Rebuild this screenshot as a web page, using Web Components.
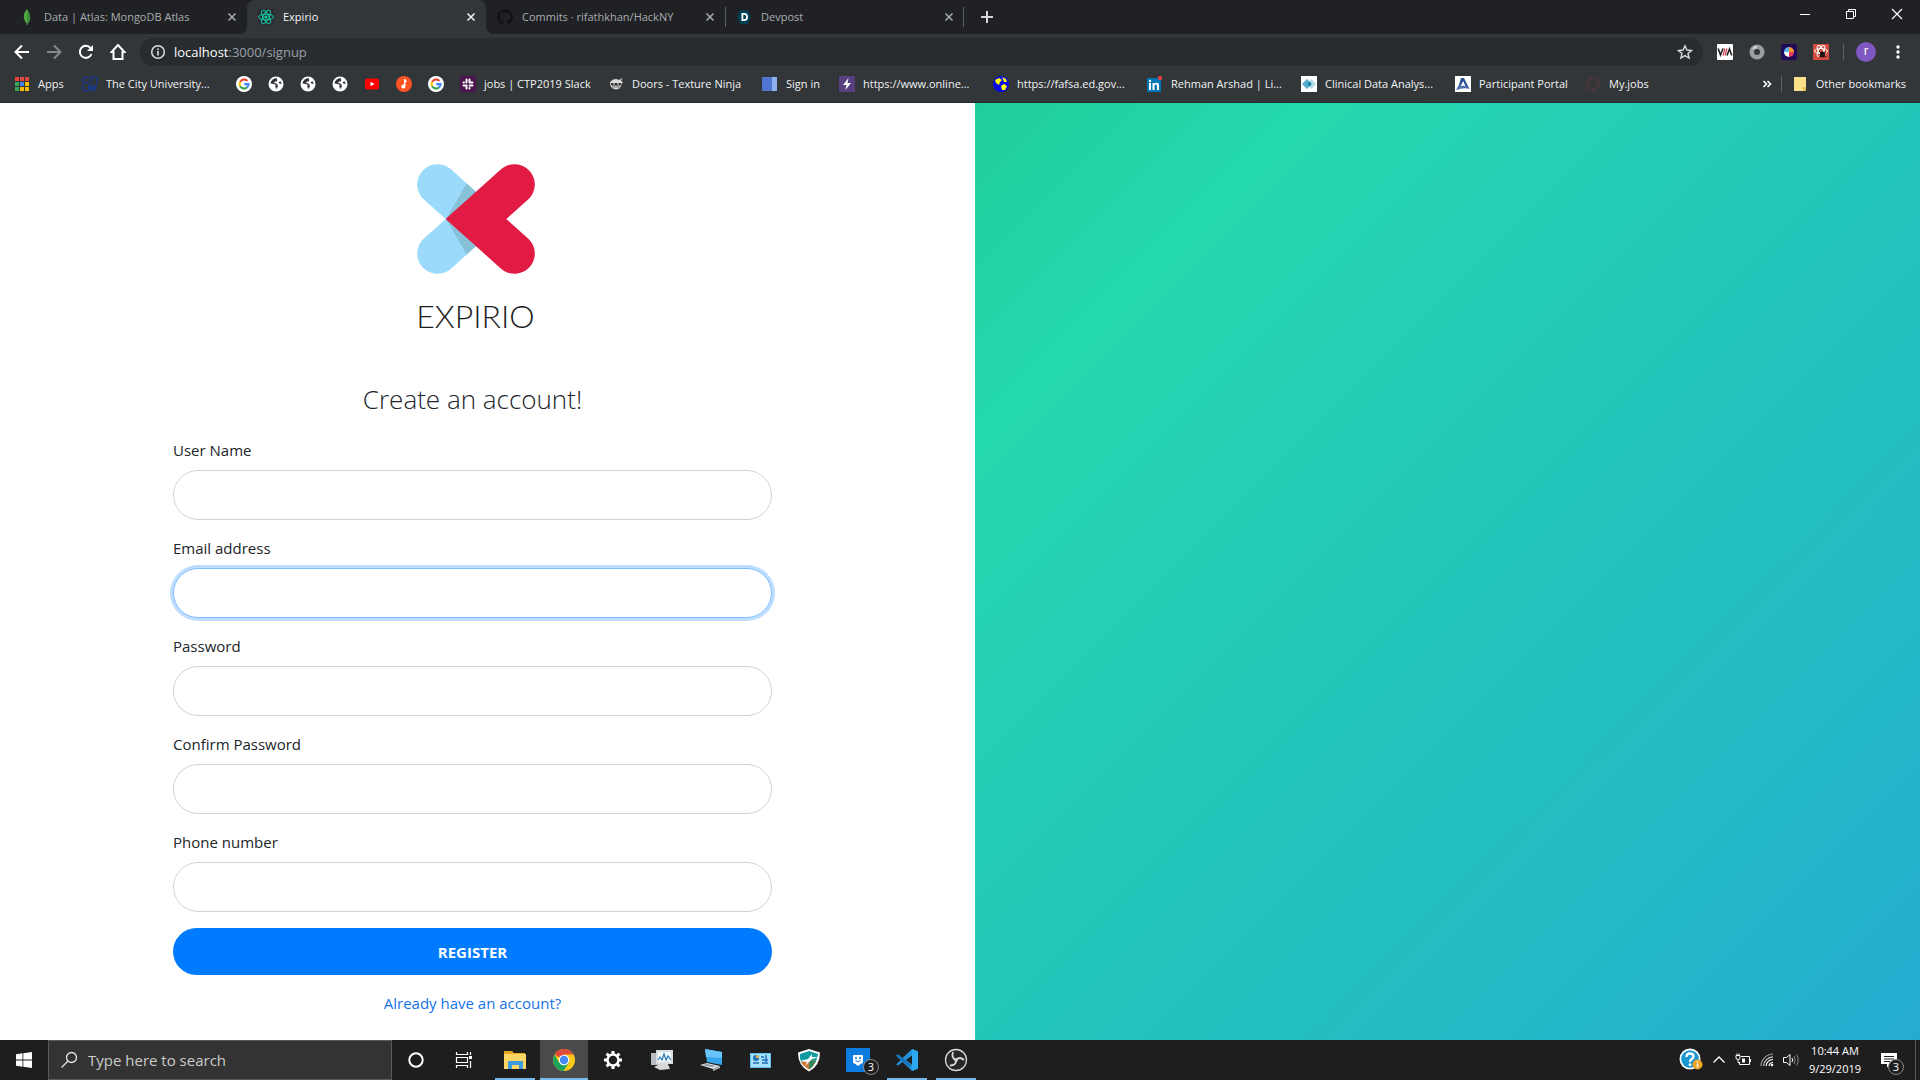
<!DOCTYPE html>
<html lang="en">
<head>
<meta charset="utf-8">
<title>Expirio</title>
<style>
    html, body {
        margin: 0;
        height: 100%;
    }

    body {
        display: flex;
        flex-direction: column;
        min-height: 100vh;
        overflow: hidden;
        font-family: "Open Sans", "Noto Sans", sans-serif;
        font-size: 15px;
        color: #212529;
        background: #ffffff;
    }

    signup-page {
        flex: 1;
    }
</style>
</head>
<body>
<browser-chrome>
    <browser-tab slot="tab" icon="leaf">Data | Atlas: MongoDB Atlas</browser-tab>
    <browser-tab slot="tab" icon="react" active>Expirio</browser-tab>
    <browser-tab slot="tab" icon="github">Commits · rifathkhan/HackNY</browser-tab>
    <browser-tab slot="tab" icon="devpost" divider>Devpost</browser-tab>

    <bookmark-item icon="apps" width="68">Apps</bookmark-item>
    <bookmark-item icon="cuny" width="154">The City University...</bookmark-item>
    <bookmark-item icon="google"></bookmark-item>
    <bookmark-item icon="globe"></bookmark-item>
    <bookmark-item icon="globe"></bookmark-item>
    <bookmark-item icon="globe"></bookmark-item>
    <bookmark-item icon="youtube"></bookmark-item>
    <bookmark-item icon="music"></bookmark-item>
    <bookmark-item icon="google"></bookmark-item>
    <bookmark-item icon="slack" width="148">jobs | CTP2019 Slack</bookmark-item>
    <bookmark-item icon="ninja" width="154">Doors - Texture Ninja</bookmark-item>
    <bookmark-item icon="signin" width="77">Sign in</bookmark-item>
    <bookmark-item icon="bolt" width="154">https://www.online...</bookmark-item>
    <bookmark-item icon="earth" width="154">https://fafsa.ed.gov...</bookmark-item>
    <bookmark-item icon="linkedin" width="154">Rehman Arshad | Li...</bookmark-item>
    <bookmark-item icon="clinical" width="154">Clinical Data Analys...</bookmark-item>
    <bookmark-item icon="portal" width="130">Participant Portal</bookmark-item>
    <bookmark-item icon="myjobs">My.jobs</bookmark-item>
    <bookmark-item slot="other" icon="folder">Other bookmarks</bookmark-item>
</browser-chrome>

<signup-page>
    <form-field name="username">User Name</form-field>
    <form-field name="email" type="email" focused>Email address</form-field>
    <form-field name="password" type="password">Password</form-field>
    <form-field name="confirm" type="password">Confirm Password</form-field>
    <form-field name="phone" type="tel">Phone number</form-field>
</signup-page>

<task-bar>
    <task-button icon="explorer" label="File Explorer" running></task-button>
    <task-button icon="chrome" label="Google Chrome" running active></task-button>
    <task-button icon="gear" label="Settings"></task-button>
    <task-button icon="monitor" label="Performance Monitor"></task-button>
    <task-button icon="computer" label="Computer"></task-button>
    <task-button icon="panel" label="Control Panel"></task-button>
    <task-button icon="shield" label="Security"></task-button>
    <task-button icon="groupme" label="GroupMe" badge="3"></task-button>
    <task-button icon="vscode" label="Visual Studio Code" running></task-button>
    <task-button icon="obs" label="OBS Studio" running></task-button>
</task-bar>

<script>
// name: [viewBox, markup]
const ICONS = {
    leaf: ["0 0 16 16", `<path d="M8 0C5 4 4.500 6 5 9.500C5.500 12 7 13.500 7.600 14.500V16H8.400V14.500C9.500 13.500 11 12 11.200 9C11.300 5.500 9.500 3 8 0Z" fill="#4faa41"/><path d="M8 0C9.500 3 11.300 5.500 11.200 9C11 12 9.500 13.500 8.400 14.500V16H8Z" fill="#3f8f3a"/>`],
    react: ["0 0 16 16", `<rect width="16" height="16" fill="#282c34"/><g fill="none" stroke="#12c9a0" stroke-width="1"><ellipse cx="8" cy="8" rx="7.400" ry="2.900"/><ellipse cx="8" cy="8" rx="7.400" ry="2.900" transform="rotate(60 8 8)"/><ellipse cx="8" cy="8" rx="7.400" ry="2.900" transform="rotate(120 8 8)"/></g><circle cx="8" cy="8" r="1.600" fill="#12c9a0"/>`],
    github: ["0 0 16 16", `<path fill="#111315" d="M8 0C3.580 0 0 3.580 0 8c0 3.540 2.290 6.530 5.470 7.590.4.070.55-.17.55-.38v-1.490c-2.230.49-2.690-.95-2.690-.95-.36-.92-.89-1.170-.89-1.170-.73-.5.060-.49.060-.49.8.060 1.230.83 1.230.83.71 1.230 1.870.87 2.330.66.070-.52.280-.87.510-1.070-1.780-.2-3.650-.89-3.650-3.950 0-.87.310-1.590.82-2.150-.08-.2-.36-1.020.080-2.120 0 0 .67-.21 2.200.82a7.600 7.600 0 0 1 4 0c1.530-1.040 2.200-.82 2.200-.82.44 1.100.16 1.920.08 2.120.51.560.82 1.270.82 2.150 0 3.070-1.870 3.750-3.650 3.950.29.250.54.730.54 1.480v2.200c0 .21.150.46.550.38A8 8 0 0 0 8 0Z"/>`],
    devpost: ["0 0 16 16", `<path d="M4.500 1h7L15 8l-3.500 7h-7L1 8Z" fill="#003e54"/><path d="M5.500 4H8a4 4 0 0 1 0 8H5.500ZM7.300 5.700V10.300H8a2.300 2.300 0 0 0 0-4.600Z" fill="#fff" fill-rule="evenodd"/>`],
    apps: ["0 0 16 16", `<g fill="#e8453c"><rect x="1" y="1" width="4" height="4"/><rect x="6" y="1" width="4" height="4"/><rect x="11" y="1" width="4" height="4"/></g><g><rect x="1" y="6" width="4" height="4" fill="#34a853"/><rect x="6" y="6" width="4" height="4" fill="#4285f4"/><rect x="11" y="6" width="4" height="4" fill="#fbbc05"/><rect x="1" y="11" width="4" height="4" fill="#34a853"/><rect x="6" y="11" width="4" height="4" fill="#fbbc05"/><rect x="11" y="11" width="4" height="4" fill="#fbbc05"/></g>`],
    cuny: ["0 0 16 16", `<g fill="none" stroke="#1b3a8c" stroke-width="1.500"><path d="M7 1.500H3Q1 1.500 1 4T3 7H7M9 7V3Q9 1 12 1T15 3V7M1 9V13Q1 15 4 15T7 13V9M8 15V9L11 15V9M11 9L13 12L15 9M13 12V15"/></g>`],
    google: ["0 0 16 16", `<circle cx="8" cy="8" r="8" fill="#fff"/><g fill="none" stroke-width="2.200"><path d="M11.400 4.900A4.500 4.500 0 0 0 4.200 5.700" stroke="#ea4335"/><path d="M4.200 5.700A4.500 4.500 0 0 0 4.100 10.200" stroke="#fbbc05"/><path d="M4.100 10.200A4.500 4.500 0 0 0 11 11.400" stroke="#34a853"/><path d="M11 11.400A4.500 4.500 0 0 0 12.500 8.200H8.200" stroke="#4285f4"/></g>`],
    globe: ["0 0 16 16", `<circle cx="8" cy="8" r="7.500" fill="#fff"/><path d="M9 2.200C5.500 2 3 4 2.500 7.500L6 8L8 9L7 11L8.500 12L7.500 13.500L9 12.500L10 9.500L8.500 7.500L6 7L7 5.500L9 5.500ZM10.500 6L13 5.500L13.500 8L11.500 7.500Z" fill="#303438"/>`],
    youtube: ["0 0 16 16", `<rect x="1" y="2.500" width="14" height="11" rx="2" fill="#f00"/><path d="M6.500 5.700V10.300L10.500 8Z" fill="#fff"/>`],
    music: ["0 0 16 16", `<circle cx="8" cy="8" r="8" fill="#fb5423"/><path d="M8 3H9.200Q10.500 4.500 11 6L9.500 6V10.500A2.100 2 0 1 1 8 8.600Z" fill="#fff"/>`],
    slack: ["0 0 16 16", `<rect width="16" height="16" fill="#4a154b"/><g stroke="#fff" stroke-width="2" stroke-linecap="round"><path d="M6.500 3.500V6.500M3.500 6.500H4M9.500 3.500V6.500M9.500 6.500H12.500M6.500 9.500H3.500M6.500 9.500V12.500M9.500 9.500H12.500M9.500 12V12.500"/></g>`],
    ninja: ["0 0 16 16", `<path d="M2 6Q6 1.500 11 4L14.500 2L13 5L15 6L13.500 8Q13 13 8 13.500Q1.500 13 2 6Z" fill="#d8d8d8"/><path d="M3 7H13V9Q11 10 8 9.500Q4.500 10 3 9Z" fill="#333"/><circle cx="6" cy="8" r=".8" fill="#fff"/><circle cx="10" cy="8" r=".8" fill="#fff"/><path d="M4 11H12" stroke="#777"/>`],
    signin: ["0 0 16 16", `<rect x="0" y="1" width="15" height="14" fill="#4f77d2"/><rect x="10" y="1" width="5" height="14" fill="#8fb2ee"/>`],
    bolt: ["0 0 16 16", `<rect width="16" height="16" fill="#583f7e"/><path d="M9.500 2L4 9H7.500L6.500 14L12 7H8.500Z" fill="#fff"/>`],
    earth: ["0 0 16 16", `<circle cx="8" cy="8" r="8" fill="#0808e8"/><path d="M2 4L6 2L9 4L7 6L6 9L3 7ZM8 10L11 8L14 10L12 14L9 14ZM9 1L13 3L14 6L11 6L10 3Z" fill="#ff0"/>`],
    linkedin: ["0 0 16 16", `<rect x="0" y="2" width="14" height="14" fill="#0077b5"/><g fill="#fff"><rect x="2" y="7" width="2" height="7"/><circle cx="3" cy="5" r="1.200"/><path d="M5.500 7H7.500V8Q8.300 6.800 9.700 6.800Q12 6.800 12 9.700V14H10V10Q10 8.600 8.900 8.600Q7.500 8.600 7.500 10.200V14H5.500Z"/></g><rect x="11" y="0" width="4" height="4" rx="1" fill="#e0403f"/>`],
    clinical: ["0 0 16 16", `<rect width="16" height="16" fill="#fff"/><path d="M10.500 3L15 8L10.500 13L6 8Z" fill="#b3dbe6"/><path d="M6 3L11 8L6 13L1 8Z" fill="#55aecb"/><path d="M8.300 5.500L10.500 8L8.300 10.500L6.500 8Z" fill="#1b7fa5"/>`],
    portal: ["0 0 16 16", `<rect width="16" height="16" fill="#fff"/><path d="M6 2H9L14 12H11.500L8 5L6 9.500L1 14L4 9Z" fill="#254f91"/><path d="M1 14Q5 9 10 10Q13 10.500 15 13Q9 11 1 14Z" fill="#4770b0"/>`],
    myjobs: ["0 0 16 16", `<g fill="none" stroke="#8d3a43" stroke-dasharray="1 1.600"><circle cx="8" cy="8" r="7"/><circle cx="8" cy="8" r="5"/></g>`],
    folder: ["0 0 16 16", `<path d="M2 1H14V15H2Z" fill="#fbe08a"/><path d="M11 11H14V15H11Z" fill="#e8bf50"/>`],
    back: ["0 0 16 16", `<path d="M15 8H2M8 1.500L1.500 8L8 14.500" fill="none" stroke="#fff" stroke-width="2"/>`],
    forward: ["0 0 16 16", `<path d="M1 8H14M8 1.500L14.500 8L8 14.500" fill="none" stroke="#85888a" stroke-width="2"/>`],
    reload: ["0 0 16 16", `<path d="M13.500 10A6 6 0 1 1 12.500 4" fill="none" stroke="#fff" stroke-width="2"/><path d="M15 1V7H9Z" fill="#fff"/>`],
    home: ["0 0 16 16", `<path d="M8 1L1.500 8H3.500V15H12.500V8H14.500Z" fill="none" stroke="#fff" stroke-width="2"/>`],
    info: ["0 0 16 16", `<circle cx="8" cy="8" r="6.300" fill="none" stroke="#dfe1e3" stroke-width="1.500"/><path d="M8 7V11.500M8 4.500V6" stroke="#dfe1e3" stroke-width="1.600"/>`],
    star: ["0 0 16 16", `<path d="M8 1.800L9.900 6L14.500 6.500L11 9.500L12.100 14L8 11.600L3.900 14L5 9.500L1.500 6.500L6.100 6Z" fill="none" stroke="#d8dadc" stroke-width="1.400"/>`],
    via: ["0 0 16 16", `<rect width="16" height="16" rx="1" fill="#fff"/><path d="M1.200 4.500L3.500 11L6 4.500M10 11.500L12.500 5L14.800 11.500" fill="none" stroke="#222" stroke-width="1.600"/><path d="M6 11.500L8 4.500M8 11.500L10 4.500" stroke="#d23a48" stroke-width="1.200"/>`],
    ring: ["0 0 16 16", `<circle cx="8" cy="8" r="5.300" fill="none" stroke="#9a9da0" stroke-width="4.600"/><path d="M4 5A5 5 0 0 1 8 3" fill="none" stroke="#d3d5d6" stroke-width="2"/>`],
    wheel: ["0 0 16 16", `<rect width="16" height="16" rx="3" fill="#210a5c"/><path d="M8 8V3A5 5 0 0 0 3 8Z" fill="#58b9e8"/><path d="M8 8V3A5 5 0 0 1 13 8Z" fill="#f59b32"/><path d="M8 8H13A5 5 0 0 1 8 13Z" fill="#ed3b62"/><path d="M8 8H3A5 5 0 0 0 8 13Z" fill="#fff"/>`],
    reactdev: ["0 0 16 16", `<rect width="16" height="16" fill="#d5493f"/><g fill="none" stroke="#fff" stroke-width="1"><ellipse cx="8" cy="7" rx="6.500" ry="2.500"/><ellipse cx="8" cy="7" rx="6" ry="2.500" transform="rotate(60 8 7)"/><ellipse cx="8" cy="7" rx="6" ry="2.500" transform="rotate(120 8 7)"/></g><ellipse cx="9.500" cy="10.500" rx="2.600" ry="3" fill="#1f1112"/><path d="M6 7L8 9M13 8L11 9M6 13L8 12M13 13L11 12" stroke="#1f1112"/>`],
    menu: ["0 0 16 16", `<g fill="#fff"><circle cx="8" cy="3" r="1.700"/><circle cx="8" cy="8" r="1.700"/><circle cx="8" cy="13" r="1.700"/></g>`],
    close: ["0 0 16 16", `<path d="M4.500 4.500L11.500 11.500M11.500 4.500L4.500 11.500" stroke="currentColor" stroke-width="1.500"/>`],
    plus: ["0 0 16 16", `<path d="M8 2V14M2 8H14" stroke="#d5d7d9" stroke-width="2"/>`],
    minimize: ["0 0 16 16", `<path d="M3 8.500H13" stroke="#fff"/>`],
    restore: ["0 0 16 16", `<path d="M3.500 5.500H10.500V12.500H3.500ZM5.500 5V3.500H12.500V10.500H11" fill="none" stroke="#fff"/>`],
    exit: ["0 0 16 16", `<path d="M3 3L13 13M13 3L3 13" stroke="#fff" stroke-width="1.200"/>`],
    more: ["0 0 16 16", `<path d="M4.500 5L7.500 8L4.500 11M8.500 5L11.500 8L8.500 11" fill="none" stroke="#fff" stroke-width="1.600"/>`],
    windows: ["0 0 16 16", `<path d="M0 2.300L6.500 1.300V7.600H0ZM7.300 1.200L16 0V7.600H7.300ZM0 8.400H6.500V14.700L0 13.700ZM7.300 8.400H16V16L7.300 14.800Z" fill="#fff"/>`],
    search: ["0 0 18 18", `<circle cx="11.500" cy="6.500" r="5" fill="none" stroke="#e6e6e6" stroke-width="1.300"/><path d="M8 10L1.500 16.500" stroke="#e6e6e6" stroke-width="1.300"/>`],
    cortana: ["0 0 18 18", `<circle cx="9" cy="9" r="6.700" fill="none" stroke="#fff" stroke-width="2"/>`],
    taskview: ["0 0 18 18", `<path d="M1.500 1V3.500H12.500V1M1.500 17V14.500H12.500V17M1.500 6.500H12.500V11.500H1.500ZM15.500 1V4M15.500 10V17" fill="none" stroke="#fff" stroke-width="1.200"/><rect x="14" y="5" width="3" height="3" fill="#fff"/>`],
    explorer: ["0 0 24 24", `<path d="M1 3H9L11 5H22V20H1Z" fill="#e8a820"/><path d="M1 6H23V21H1Z" fill="#fcd766"/><path d="M5 13H20V21H16V17H9V21H5Z" fill="#3f9be0"/>`],
    chrome: ["0 0 24 24", `<circle cx="12" cy="12" r="11" fill="#fbc817"/><path d="M12 12L2.500 6.500A11 11 0 0 1 21.500 6.500H12Z" fill="#dd4b3e"/><path d="M2.500 6.500A11 11 0 0 0 11.500 23L17 14.500L12 12L7 14.500Z" fill="#1ca45c"/><circle cx="12" cy="12" r="5.300" fill="#fff"/><circle cx="12" cy="12" r="4.200" fill="#4688f4"/>`],
    gear: ["0 0 24 24", `<circle cx="12" cy="12" r="5.500" fill="none" stroke="#fff" stroke-width="2.500"/><path d="M12 3V6M12 18V21M3 12H6M18 12H21M5.600 5.600L7.700 7.700M16.300 16.300L18.400 18.400M5.600 18.400L7.700 16.300M16.300 7.700L18.400 5.600" stroke="#fff" stroke-width="3"/>`],
    monitor: ["0 0 24 24", `<path d="M1 5H10V17H1Z" fill="#b8bcc0"/><path d="M4 19L10 16H18L20 21L10 22Z" fill="#d6d8da"/><path d="M6 2H23V16H6Z" fill="#d9dcdf"/><path d="M8 4H21V14H8Z" fill="#f3f8fb"/><path d="M8 12L10 9L12 12L14 6L16 12L18 8L21 12" fill="none" stroke="#2b78b8" stroke-width="1.200"/>`],
    computer: ["0 0 24 24", `<path d="M6 1L23 4V17L8 14Z" fill="#35a5ee"/><path d="M6 1L23 4V10L7 9Z" fill="#68c4fa"/><path d="M1 17L8 15L21 18L14 21Z" fill="#dfe3e6"/><path d="M3 17L8 16L17 18L13 19Z" fill="#8d959b"/><path d="M14 21L21 18V20L14 23Z" fill="#aeb4b9"/>`],
    panel: ["0 0 24 24", `<rect x="2" y="5" width="21" height="15" fill="#5ec1ef"/><rect x="3" y="6" width="19" height="13" fill="#a7e0fa"/><circle cx="8" cy="10" r="3" fill="#1e72b8"/><path d="M8 10V7A3 3 0 0 1 11 10Z" fill="#f5b43e"/><path d="M13 9H16M14 12H20M14 15H20M5 15H11M18 7V14" stroke="#1e72b8" stroke-width="1.500"/>`],
    shield: ["0 0 24 24", `<path d="M12 1L23 4.500Q23 18 12 23.500Q1 18 1 4.500Z" fill="#fff"/><path d="M12 3L21 6Q20.500 10 19 13L12 12L4 14Q2.500 10 3 6Z" fill="#0f9aa0"/><path d="M4 14L12 12L19 13Q17 18 12 21.500Q6 18 4 14Z" fill="#c77a35"/><path d="M12 12L19 13Q17 18 12 21.500Z" fill="#36885a"/><path d="M3 13L11 11L15 6L15 9L22 9L15 11L12 14L8 18L10 14Z" fill="#fff"/>`],
    groupme: ["0 0 24 24", `<rect width="24" height="24" fill="#0c7ce0"/><path d="M8 7H16Q17 7 17 8V14Q17 15.500 15 15.800L12 18L9 15.800Q7 15.500 7 14V8Q7 7 8 7Z" fill="#fff"/><circle cx="10" cy="10" r="1" fill="#0c7ce0"/><circle cx="14" cy="10" r="1" fill="#0c7ce0"/><path d="M9.500 12.500Q12 15 14.500 12.500" fill="none" stroke="#0c7ce0"/>`],
    vscode: ["0 0 24 24", `<path d="M17 1L7.500 10L3 6.500L1 7.500L5.500 12L1 16.500L3 17.500L7.500 14L17 23L23 20.500V3.500ZM17 7.500V16.500L11 12Z" fill="#2391d6" fill-rule="evenodd"/><path d="M17 1L23 3.500V20.500L17 23Z" fill="#2ea8ee"/><path d="M3 6.500L1 7.500L14 19.500L17 16.500Z" fill="#1675b8"/>`],
    obs: ["0 0 24 24", `<circle cx="12" cy="12" r="10.500" fill="#28282a" stroke="#d8d8d8" stroke-width="1.300"/><path d="M12 12Q7 10 9 4M12 12Q15.500 8 20 12M12 12Q12.500 17.500 6 17.500" fill="none" stroke="#d8d8d8" stroke-width="1.800"/><circle cx="12" cy="12" r="1.800" fill="#d8d8d8"/>`],
    help: ["0 0 24 24", `<circle cx="11" cy="11" r="10.500" fill="#fff"/><circle cx="11" cy="11" r="8.800" fill="#1a96d0"/><path d="M7.500 9Q7.500 5.500 11 5.500T14.500 8.500Q14.500 10 12.700 11T11 14" fill="none" stroke="#fff" stroke-width="2.300"/><circle cx="11" cy="16.700" r="1.400" fill="#fff"/><circle cx="18.500" cy="16.500" r="5" fill="#f0a51e"/><path d="M18.500 15.500V19.500M18.500 13V14.500" stroke="#fff" stroke-width="1.500"/>`],
    chevron: ["0 0 16 16", `<path d="M2.500 10.500L8 5L13.500 10.500" fill="none" stroke="#fff" stroke-width="1.300"/>`],
    battery: ["0 0 16 16", `<path d="M6 4.500H14.500V12.500H4.500V10M15.500 7V10M1 3.500H5V6Q5 7.500 3 7.500T1 6ZM2 1.500V3.500M4 1.500V3.500M3 8V10.500H5" fill="none" stroke="#fff"/><rect x="7" y="6.500" width="3" height="4" fill="#fff"/>`],
    wifi: ["0 0 16 16", `<g fill="none" stroke="#fff" stroke-width="1.200"><path d="M10 14A4 4 0 0 1 14 10.500"/><path d="M7 14A7 7 0 0 1 14 7.500"/><path d="M4.500 14A10 10 0 0 1 14 4.800" stroke="#ccc"/><path d="M2 14A12.500 12.500 0 0 1 14 2" stroke="#999"/></g><circle cx="13" cy="13" r="1.300" fill="#fff"/>`],
    volume: ["0 0 16 16", `<path d="M.5 5.500H3.500L7 2.500V13.500L3.500 10.500H.5Z" fill="none" stroke="#fff"/><path d="M9 6Q10.500 8 9 10" fill="none" stroke="#fff"/><path d="M11 4Q13.500 8 11 12M13.500 2.500Q17 8 13.500 13.500" fill="none" stroke="#888"/>`],
    notes: ["0 0 16 16", `<path d="M0 1H16V12H10L6 15.500V12H0Z" fill="#fff"/><path d="M3 4.500H13M3 7H13M3 9.500H9" stroke="#1e1e1e"/>`]
};

function icon(name, size) {
    const [box, markup] = ICONS[name];
    return `<svg viewBox="${box}" width="${size}" height="${size}" aria-hidden="true">${markup}</svg>`;
}

class BrowserTab extends HTMLElement {
    constructor() {
        super();
        this.attachShadow({ mode: "open" });
    }

    connectedCallback() {
        this.shadowRoot.innerHTML = `
        <style>
            :host {
                display: flex;
                align-items: center;
                position: relative;
                box-sizing: border-box;
                width: 239px;
                height: 34px;
                padding: 0 7px 0 11px;
                color: #a9adb1;
            }

            :host([active]) {
                background: #323639;
                border-radius: 8px 8px 0 0;
                color: #f1f3f4;
            }

            :host([active])::before,
            :host([active])::after {
                content: "";
                position: absolute;
                bottom: 0;
                width: 8px;
                height: 8px;
            }

            :host([active])::before {
                left: -8px;
                background: radial-gradient(circle at 0 0, transparent 8px, #323639 8px);
            }

            :host([active])::after {
                right: -8px;
                background: radial-gradient(circle at 100% 0, transparent 8px, #323639 8px);
            }

            :host([divider]) {
                background: linear-gradient(#5b5e61, #5b5e61) left center / 1px 20px no-repeat,
                    linear-gradient(#5b5e61, #5b5e61) right center / 1px 20px no-repeat;
            }

            .title {
                flex: 1;
                margin-left: 9px;
                overflow: hidden;
                white-space: nowrap;
            }

            button {
                display: flex;
                padding: 0;
                border: 0;
                background: none;
                color: inherit;
            }
        </style>
        ${icon(this.getAttribute("icon"), 16)}
        <span class="title"><slot></slot></span>
        <button aria-label="Close tab">${icon("close", 16)}</button>
        `;
    }
}
customElements.define("browser-tab", BrowserTab);

class BookmarkItem extends HTMLElement {
    constructor() {
        super();
        this.attachShadow({ mode: "open" });
    }

    connectedCallback() {
        const width = this.getAttribute("width");

        this.shadowRoot.innerHTML = `
        <style>
            :host {
                display: block;
                flex: none;
                width: ${width ? width + "px" : "auto"};
            }

            a {
                display: flex;
                align-items: center;
                gap: 8px;
                padding: 0 8px;
                color: #f1f3f4;
                text-decoration: none;
                white-space: nowrap;
            }

            svg {
                flex: none;
            }
        </style>
        <a href="#">${icon(this.getAttribute("icon"), 16)}${this.textContent ? "<span><slot></slot></span>" : ""}</a>
        `;
    }
}
customElements.define("bookmark-item", BookmarkItem);

class BrowserChrome extends HTMLElement {
    constructor() {
        super();
        this.attachShadow({ mode: "open" });
    }

    connectedCallback() {
        this.shadowRoot.innerHTML = `
        <style>
            :host {
                display: block;
                flex: none;
                background: #323639;
                border-bottom: 1px solid #1f2d2e;
                font-size: 11px;
                line-height: 16px;
            }

            button {
                display: flex;
                align-items: center;
                justify-content: center;
                padding: 0;
                border: 0;
                background: none;
            }

            .strip, .toolbar, .omnibox, .bookmarks {
                display: flex;
                align-items: center;
            }

            .strip {
                height: 34px;
                padding-left: 8px;
                background: #202124;
            }

            .strip .new {
                width: 46px;
                height: 34px;
            }

            .window {
                display: flex;
                margin-left: auto;
            }

            .window button {
                width: 46px;
                height: 28px;
                margin-bottom: 6px;
            }

            .toolbar {
                padding: 4px 6px 0;
            }

            .toolbar > button {
                width: 32px;
                height: 28px;
            }

            .omnibox {
                flex: 1;
                height: 28px;
                margin: 0 6px;
                padding: 0 10px;
                gap: 8px;
                border-radius: 14px;
                background: #282c2f;
                font-size: 13px;
                color: #9aa0a6;
            }

            .omnibox .url {
                flex: 1;
            }

            .omnibox b {
                font-weight: 400;
                color: #ffffff;
            }

            .rule {
                width: 1px;
                height: 16px;
                margin: 0 6px;
                background: #5f6368;
            }

            .avatar {
                width: 20px;
                height: 20px;
                border-radius: 50%;
                background: #7e57c2;
                color: #ffffff;
                line-height: 18px;
                text-align: center;
            }

            .bookmarks {
                height: 36px;
                padding: 0 6px;
            }

            .overflow {
                width: 28px;
                margin-left: auto;
            }

            .bookmarks .rule {
                margin: 0 2px 0 0;
            }
        </style>
        <div class="strip">
            <slot name="tab"></slot>
            <button class="new" aria-label="New tab">${icon("plus", 16)}</button>
            <div class="window">
                <button aria-label="Minimize">${icon("minimize", 16)}</button>
                <button aria-label="Restore">${icon("restore", 16)}</button>
                <button aria-label="Close">${icon("exit", 16)}</button>
            </div>
        </div>
        <div class="toolbar">
            <button aria-label="Back">${icon("back", 16)}</button>
            <button aria-label="Forward">${icon("forward", 16)}</button>
            <button aria-label="Reload">${icon("reload", 16)}</button>
            <button aria-label="Home">${icon("home", 16)}</button>
            <div class="omnibox">
                ${icon("info", 16)}
                <span class="url"><b>localhost</b>:3000/signup</span>
                ${icon("star", 16)}
            </div>
            <button aria-label="VIA">${icon("via", 16)}</button>
            <button aria-label="Ring">${icon("ring", 16)}</button>
            <button aria-label="Wheel">${icon("wheel", 16)}</button>
            <button aria-label="React tools">${icon("reactdev", 16)}</button>
            <span class="rule"></span>
            <button aria-label="Profile"><span class="avatar">r</span></button>
            <button aria-label="Menu">${icon("menu", 16)}</button>
        </div>
        <div class="bookmarks">
            <slot></slot>
            <button class="overflow" aria-label="More bookmarks">${icon("more", 16)}</button>
            <span class="rule"></span>
            <slot name="other"></slot>
        </div>
        `;
    }
}
customElements.define("browser-chrome", BrowserChrome);

class FormField extends HTMLElement {
    constructor() {
        super();
        this.attachShadow({ mode: "open" });
    }

    connectedCallback() {
        const name = this.getAttribute("name");
        const type = this.getAttribute("type") || "text";

        this.shadowRoot.innerHTML = `
        <style>
            :host {
                display: block;
                margin-bottom: 16px;
            }

            label {
                display: block;
                margin-bottom: 8px;
                line-height: 24px;
            }

            input {
                display: block;
                box-sizing: border-box;
                width: 100%;
                height: 50px;
                padding: 0 24px;
                border: 1px solid #ced4da;
                border-radius: 25px;
                background: #ffffff;
                font: inherit;
                outline: none;
            }

            :host([focused]) input {
                border-color: #80bdff;
                box-shadow: 0 0 0 3px #bfdeff;
            }
        </style>
        <label for="${name}"><slot></slot></label>
        <input id="${name}" name="${name}" type="${type}">
        `;
    }
}
customElements.define("form-field", FormField);

class BrandLogo extends HTMLElement {
    constructor() {
        super();
        this.attachShadow({ mode: "open" });
    }

    connectedCallback() {
        this.shadowRoot.innerHTML = `
        <style>
            :host {
                display: flex;
                flex-direction: column;
                align-items: center;
                gap: 24px;
                padding-left: 6px;
                font-family: Lato, sans-serif;
                font-size: 32px;
                font-weight: 300;
                line-height: 36px;
                color: #1c1c1c;
            }
        </style>
        <svg viewBox="110 71 352 328" width="118" height="110" role="img" aria-label="Expirio logo">
            <g fill="none" stroke-width="121" stroke-linecap="round" stroke-linejoin="miter">
                <path d="M171 132L286 235L171 338" stroke="#9bdafb"/>
                <path d="M197 235L258 129L290 158L290 312L258 341Z" fill="#87c1d7"/>
                <path d="M401 132L286 235L401 338" stroke="#e21b45"/>
            </g>
        </svg>
        <span>EXPIRIO</span>
        `;
    }
}
customElements.define("brand-logo", BrandLogo);

class SignupPage extends HTMLElement {
    constructor() {
        super();
        this.attachShadow({ mode: "open" });
    }

    connectedCallback() {
        this.shadowRoot.innerHTML = `
        <style>
            :host {
                display: flex;
                min-height: 0;
            }

            .panel {
                display: flex;
                justify-content: center;
                flex: 945;
                padding-right: 30px;
                background: #ffffff;
            }

            .art {
                flex: 945;
                background: linear-gradient(135deg, #1fce9a 0%, #24d8ae 18%, #24c6ba 50%, #23b7c8 82%, #25abd1 100%);
            }

            form {
                width: 599px;
                padding-top: 61px;
            }

            h3 {
                margin: 48px 0 22px;
                font-size: 26px;
                font-weight: 300;
                line-height: 34px;
                text-align: center;
            }

            button {
                display: block;
                width: 100%;
                height: 47px;
                margin-bottom: 16px;
                border: 0;
                border-radius: 24px;
                background: #007bff;
                color: #ffffff;
                font: 700 15px/20px "Open Sans", sans-serif;
                text-transform: uppercase;
            }

            .login {
                line-height: 24px;
                text-align: center;
            }

            a {
                color: #1673e6;
                text-decoration: none;
            }
        </style>
        <div class="panel">
            <form>
                <brand-logo></brand-logo>
                <h3>Create an account!</h3>
                <slot></slot>
                <button type="button">Register</button>
                <div class="login"><a href="#">Already have an account?</a></div>
            </form>
        </div>
        <div class="art"></div>
        `;
    }
}
customElements.define("signup-page", SignupPage);

class TaskButton extends HTMLElement {
    constructor() {
        super();
        this.attachShadow({ mode: "open" });
    }

    connectedCallback() {
        const badge = this.getAttribute("badge");

        this.shadowRoot.innerHTML = `
        <style>
            :host {
                display: block;
                position: relative;
                width: 48px;
                height: 40px;
            }

            button {
                display: flex;
                align-items: center;
                justify-content: center;
                width: 100%;
                height: 100%;
                padding: 0;
                border: 0;
                background: none;
            }

            :host([running]) button {
                background: linear-gradient(#76b9ed, #76b9ed) center bottom / 40px 2px no-repeat;
            }

            :host([active]) button {
                background: linear-gradient(#76b9ed, #76b9ed) center bottom / 48px 2px no-repeat, #4a4a4a;
            }

            .badge {
                position: absolute;
                right: 3px;
                bottom: 5px;
                box-sizing: border-box;
                width: 16px;
                height: 16px;
                border: 1px solid #8a8a8a;
                border-radius: 50%;
                background: #1e1e1e;
                color: #ffffff;
                font-size: 11px;
                line-height: 14px;
                text-align: center;
            }
        </style>
        <button aria-label="${this.getAttribute("label")}">${icon(this.getAttribute("icon"), this.getAttribute("size") || 24)}</button>
        ${badge ? `<span class="badge">${badge}</span>` : ""}
        `;
    }
}
customElements.define("task-button", TaskButton);

class TaskBar extends HTMLElement {
    constructor() {
        super();
        this.attachShadow({ mode: "open" });
    }

    connectedCallback() {
        this.shadowRoot.innerHTML = `
        <style>
            :host {
                display: flex;
                flex: none;
                align-items: center;
                height: 40px;
                background: #1e1e1e;
                color: #ffffff;
            }

            .search {
                display: flex;
                align-items: center;
                box-sizing: border-box;
                width: 344px;
                height: 40px;
                padding: 0 11px;
                gap: 10px;
                border: 1px solid #5a5a5a;
                background: #333333;
            }

            input {
                flex: 1;
                min-width: 0;
                padding: 0;
                border: 0;
                outline: none;
                background: none;
                font: inherit;
                color: #ffffff;
            }

            input::placeholder {
                color: #cccccc;
                opacity: 1;
            }

            .apps {
                display: flex;
                gap: 1px;
                margin-left: 3px;
            }

            .tray {
                display: flex;
                align-items: center;
                gap: 8px;
                height: 40px;
                margin-left: auto;
                margin-right: 4px;
                padding-right: 8px;
                border-right: 1px solid #5a5a5a;
            }

            .clock {
                width: 56px;
                font-size: 11px;
                line-height: 18px;
                text-align: center;
                white-space: nowrap;
            }

            .tray task-button {
                width: 36px;
            }
        </style>
        <task-button icon="windows" size="16" label="Start"></task-button>
        <div class="search">
            ${icon("search", 18)}
            <input type="text" placeholder="Type here to search" aria-label="Type here to search">
        </div>
        <task-button icon="cortana" size="18" label="Cortana"></task-button>
        <task-button icon="taskview" size="18" label="Task View"></task-button>
        <div class="apps"><slot></slot></div>
        <div class="tray">
            ${icon("help", 24)}
            ${icon("chevron", 16)}
            ${icon("battery", 16)}
            ${icon("wifi", 16)}
            ${icon("volume", 16)}
            <div class="clock"><div>10:44 AM</div><div>9/29/2019</div></div>
            <task-button icon="notes" size="16" label="Notifications" badge="3"></task-button>
        </div>
        `;
    }
}
customElements.define("task-bar", TaskBar);
</script>
</body>
</html>
